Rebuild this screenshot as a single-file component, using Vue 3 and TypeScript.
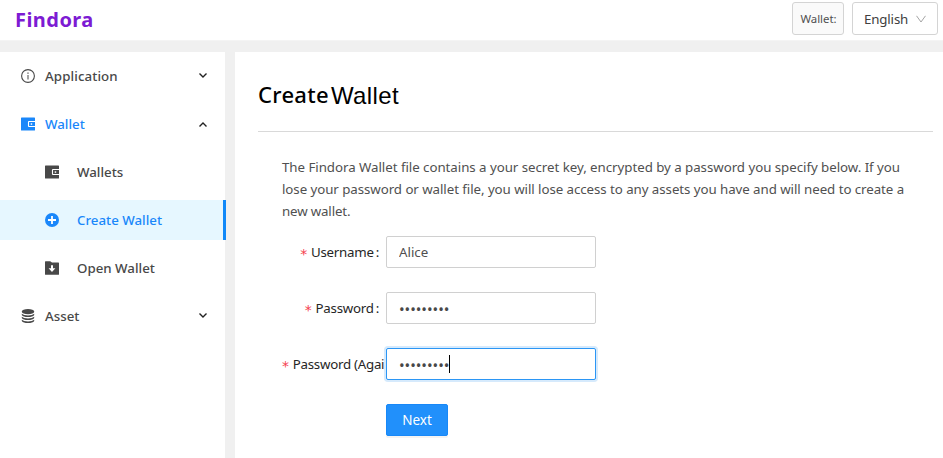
<script setup lang="ts">
import { ref } from 'vue'

interface MenuEntry {
  key: string
  label: string
  icon: 'info' | 'wallet' | 'plus' | 'folder' | 'database'
  child?: boolean
  arrow?: 'up' | 'down'
  state?: 'open' | 'selected'
}

const menu: MenuEntry[] = [
  { key: 'application', label: 'Application', icon: 'info', arrow: 'down' },
  { key: 'wallet', label: 'Wallet', icon: 'wallet', arrow: 'up', state: 'open' },
  { key: 'wallets', label: 'Wallets', icon: 'wallet', child: true },
  { key: 'create-wallet', label: 'Create Wallet', icon: 'plus', child: true, state: 'selected' },
  { key: 'open-wallet', label: 'Open Wallet', icon: 'folder', child: true },
  { key: 'asset', label: 'Asset', icon: 'database', arrow: 'down' },
]

const intro: string[] = [
  'The Findora Wallet file contains a your secret key, encrypted by a password you specify below. If you',
  'lose your password or wallet file, you will lose access to any assets you have and will need to create a',
  'new wallet.',
]

const username = ref('Alice')
const password = ref('•••••••••')
const passwordAgain = ref('•••••••••')
</script>

<template>
  <div class="page">
    <header class="topbar">
      <div class="brand"><span>Findora</span></div>
      <div class="tag"><span>Wallet:</span></div>
      <div class="lang">
        <span>English</span>
        <svg width="10" height="8" viewBox="0 0 10 8"><path d="M0.5 0.8 5 7 9.5 0.8" fill="none" stroke="#a4a4a4" stroke-width="1" /></svg>
      </div>
    </header>

    <div class="body">
      <nav class="sidebar">
        <div v-for="m in menu" :key="m.key" class="item" :class="[m.key, m.state, { child: m.child }]">
          <svg v-if="m.icon === 'info'" class="icon" viewBox="0 0 14 14">
            <circle cx="7" cy="7" r="6.4" fill="none" stroke="currentColor" stroke-width="1.1" />
            <path d="M6.5 6h1v4.4h-1zM6.4 3.6h1.2v1.2H6.4z" fill="currentColor" />
          </svg>
          <svg v-else-if="m.icon === 'wallet'" class="icon" viewBox="0 0 14 14">
            <path fill="currentColor" d="M.6.4h12.8q.6 0 .6.6v12q0 .6-.6.6H.6Q0 13.600 0 13V1Q0 .4.6.4z" />
            <path fill="none" stroke="#fff" stroke-width="1.100" d="M14 4.500H8q-.5 0-.5.5v4q0 .5.5.5h6" />
            <path fill="#fff" d="M9.700 6.300h1.500v1.500H9.700z" />
          </svg>
          <svg v-else-if="m.icon === 'plus'" class="icon" viewBox="0 0 14 14">
            <circle cx="7" cy="7" r="7" fill="currentColor" />
            <path d="M7 3v8M3 7h8" stroke="#fff" stroke-width="1.800" />
          </svg>
          <svg v-else-if="m.icon === 'folder'" class="icon" viewBox="0 0 14 14">
            <path fill="currentColor" d="M.6.200h4.600L7 1.400h6.400q.6 0 .6.6V13.200q0 .6-.6.6H.6q-.6 0-.6-.6V.8Q0 .2.6.2z" />
            <path fill="#fff" d="M6 4.300h2v3h2.400L7 10.900 3.600 7.300H6z" />
          </svg>
          <svg v-else class="icon" viewBox="0 0 14 14">
            <g fill="currentColor">
              <ellipse cx="7" cy="2.700" rx="6.200" ry="2.600" />
              <path d="M.8 4.800Q2.500 6.600 7 6.600T13.200 4.800V6Q11.800 8 7 8T.8 6zM.8 7.800Q2.500 9.600 7 9.600T13.200 7.800V9Q11.800 11 7 11T.8 9zM.8 10.800Q2.500 12.600 7 12.600T13.200 10.800V12Q11.800 14 7 14T.8 12z" />
            </g>
          </svg>
          <span class="label">{{ m.label }}</span>
          <svg v-if="m.arrow" class="arrow" :class="m.arrow" viewBox="0 0 8 5">
            <path d="M.5.500 4 4 7.500.500" fill="none" stroke="#222" stroke-width="1.400" />
          </svg>
        </div>
      </nav>

      <main class="content">
        <h1><span class="first">Create</span><span class="second">Wallet</span></h1>
        <p class="intro"><span v-for="(line, i) in intro" :key="i" :class="'l' + i">{{ line }}</span></p>
        <form class="form" @submit.prevent>
          <div class="row">
            <label><i>*</i><span>Username</span><b>:</b></label>
            <div class="field"><input v-model="username" type="text" /></div>
          </div>
          <div class="row">
            <label><i>*</i><span>Password</span><b>:</b></label>
            <div class="field"><input v-model="password" class="dots" type="text" /></div>
          </div>
          <div class="row long">
            <label><i>*</i><span>Password (Agai</span></label>
            <div class="field active"><input v-model="passwordAgain" class="dots" type="text" /><span class="caret"></span></div>
          </div>
          <button type="submit"><span>Next</span></button>
        </form>
      </main>
    </div>
  </div>
</template>

<style>
body {
  background: #fff;
  overflow: hidden;
}
</style>

<style scoped>
.page {
  width: 943px;
  height: 458px;
  overflow: hidden;
  display: flex;
  flex-direction: column;
  background: #f0f0f0;
  font-family: "Noto Sans", "Open Sans", sans-serif;
  font-size: 13.3px;
  color: #404040;
  white-space: nowrap;
}
.page * {
  box-sizing: border-box;
}
svg {
  display: block;
  flex: none;
}
.topbar {
  height: 41px;
  flex: none;
  display: flex;
  align-items: flex-start;
  padding: 2px 5px 0 15px;
  background: #fff;
  border-bottom: 1px solid #f4f4f4;
}
.brand {
  flex: 1;
  line-height: 36px;
  font-size: 20px;
  letter-spacing: 0.45px;
  font-weight: 700;
  color: #7d1bd3;
}
.tag,
.lang {
  height: 33px;
  border: 1px solid #d4d4d4;
  border-radius: 3px;
  display: flex;
  align-items: center;
}
.tag {
  width: 52px;
  justify-content: center;
  background: #fafafa;
  font-size: 11.4px;
  color: #505050;
  padding-left: 1px;
  margin-right: 8px;
}
.lang {
  width: 86px;
  padding: 0 11px 0 11px;
  justify-content: space-between;
}
.lang span {
  letter-spacing: -0.15px;
}
.body {
  flex: 1;
  display: flex;
  gap: 10px;
  padding-top: 11px;
}
.sidebar {
  width: 225px;
  flex: none;
  background: #fff;
  padding-top: 4px;
  display: flex;
  flex-direction: column;
  gap: 8px;
}
.item {
  height: 40px;
  flex: none;
  display: flex;
  align-items: center;
  padding: 0 18px 0 21px;
  font-weight: 500;
  color: #484848;
}
.item.application .label {
  letter-spacing: 0.1px;
}
.item.child {
  padding-left: 45px;
}
.icon {
  width: 14px;
  height: 14px;
  margin-right: 10px;
}
.child .icon {
  margin-right: 18px;
}
.label {
  line-height: 20px;
}
.item.open,
.item.selected {
  color: #1a87fa;
}
.item.selected {
  background: #e6f7ff;
  width: 226px;
  border-right: 3px solid #1088f8;
}
.arrow {
  width: 8px;
  height: 5px;
  margin: -2px 0 0 auto;
}
.arrow.up {
  transform: rotate(180deg);
  margin-top: 0;
}
.content {
  flex: 1;
  background: #fff;
  padding: 23px 10px 0 23px;
}
h1 {
  margin: 0;
  height: 57px;
  border-bottom: 1px solid #d9d9d9;
  display: flex;
  color: #000;
  font-size: 22px;
  line-height: 39px;
}
.first {
  font-weight: 500;
  letter-spacing: 0.3px;
}
.second {
  font: 400 24px/41px "Liberation Sans", sans-serif;
  letter-spacing: 0.4px;
  margin-left: 2px;
}
.intro {
  margin: 24px 0 0 24px;
  display: flex;
  flex-direction: column;
  align-items: flex-start;
  line-height: 22px;
  color: #505050;
}
.l0 {
  letter-spacing: -0.04px;
}
.l1 {
  letter-spacing: -0.06px;
}
.l2 {
  letter-spacing: -0.15px;
}
.form {
  margin: 14px 0 0 24px;
  display: flex;
  flex-direction: column;
  gap: 24px;
}
.row {
  display: flex;
  height: 32px;
}
label {
  width: 104px;
  flex: none;
  display: flex;
  justify-content: flex-end;
  align-items: center;
  padding: 0 7px 0 0;
  letter-spacing: -0.25px;
  color: #262626;
}
.long label {
  justify-content: flex-start;
  padding-right: 0;
  letter-spacing: -0.26px;
}
label i {
  font: 400 14px/16px "DejaVu Sans", sans-serif;
  color: #f5404e;
  margin-right: 4px;
  padding-top: 3px;
}
label b {
  font-weight: 400;
  margin-left: 2px;
}
.field {
  width: 210px;
  height: 32px;
  display: flex;
  align-items: center;
  padding: 0 11px 0 12px;
  border: 1px solid #d0d0d0;
  border-radius: 2px;
  position: relative;
  background: #fff;
}
.field.active {
  border-color: #2b96f5;
  box-shadow: 0 0 0 2px #d6eafc;
}
input {
  width: 100%;
  border: 0;
  padding: 0;
  outline: 0;
  background: none;
  font: inherit;
  color: #505050;
}
.dots {
  font-size: 15px;
  letter-spacing: -0.05px;
  padding-top: 2px;
  color: #484848;
}
.caret {
  position: absolute;
  left: 62px;
  top: 6px;
  width: 1px;
  height: 18px;
  background: #000;
}
button {
  margin: 0 0 0 104px;
  width: 62px;
  height: 32px;
  border: 1px solid #1888f8;
  border-radius: 2px;
  background: #2190fb;
  box-shadow: 0 2px 0 #f3f3f3;
  color: #fff;
  font: inherit;
  font-size: 13.500px;
  padding: 0;
}
</style>
